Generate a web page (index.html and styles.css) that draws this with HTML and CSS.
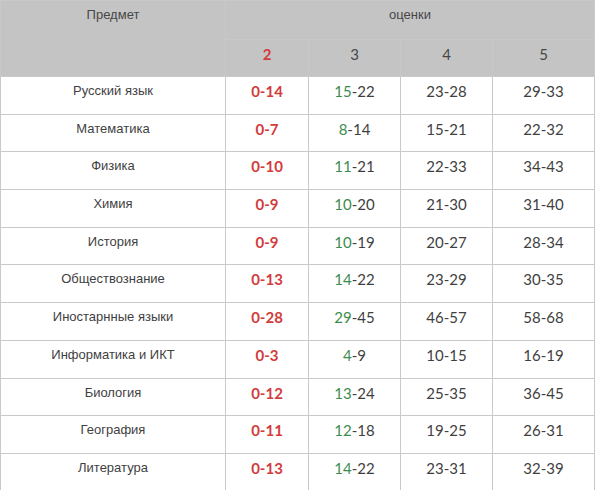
FILE: index.html
```html
<!DOCTYPE html>
<html lang="ru">
<head>
<meta charset="utf-8">
<link rel="stylesheet" href="styles.css">
</head>
<body>
<table class="grades">
  <colgroup>
    <col class="c-subj"><col class="c-2"><col class="c-3"><col class="c-4"><col class="c-5">
  </colgroup>
  <thead>
    <tr class="h1">
      <th rowspan="2" class="subj-h">Предмет</th>
      <th colspan="4">оценки</th>
    </tr>
    <tr class="h2">
      <th class="num red">2</th>
      <th class="num">3</th>
      <th class="num">4</th>
      <th class="num">5</th>
    </tr>
  </thead>
  <tbody>
    <tr><td>Русский язык</td><td class="num red">0-14</td><td class="num"><span class="green">15</span>-22</td><td class="num">23-28</td><td class="num">29-33</td></tr>
    <tr><td>Математика</td><td class="num red">0-7</td><td class="num"><span class="green">8</span>-14</td><td class="num">15-21</td><td class="num">22-32</td></tr>
    <tr><td>Физика</td><td class="num red">0-10</td><td class="num"><span class="green">11</span>-21</td><td class="num">22-33</td><td class="num">34-43</td></tr>
    <tr><td>Химия</td><td class="num red">0-9</td><td class="num"><span class="green">10</span>-20</td><td class="num">21-30</td><td class="num">31-40</td></tr>
    <tr><td>История</td><td class="num red">0-9</td><td class="num"><span class="green">10</span>-19</td><td class="num">20-27</td><td class="num">28-34</td></tr>
    <tr><td>Обществознание</td><td class="num red">0-13</td><td class="num"><span class="green">14</span>-22</td><td class="num">23-29</td><td class="num">30-35</td></tr>
    <tr><td>Иностарнные языки</td><td class="num red">0-28</td><td class="num"><span class="green">29</span>-45</td><td class="num">46-57</td><td class="num">58-68</td></tr>
    <tr><td>Информатика и ИКТ</td><td class="num red">0-3</td><td class="num"><span class="green">4</span>-9</td><td class="num">10-15</td><td class="num">16-19</td></tr>
    <tr><td>Биология</td><td class="num red">0-12</td><td class="num"><span class="green">13</span>-24</td><td class="num">25-35</td><td class="num">36-45</td></tr>
    <tr><td>География</td><td class="num red">0-11</td><td class="num"><span class="green">12</span>-18</td><td class="num">19-25</td><td class="num">26-31</td></tr>
    <tr><td>Литература</td><td class="num red">0-13</td><td class="num"><span class="green">14</span>-22</td><td class="num">23-31</td><td class="num">32-39</td></tr>
  </tbody>
</table>
</body>
</html>
```
FILE: styles.css
```css
html, body {
  margin: 0;
  padding: 0;
  background: #fff;
}
.grades {
  border-collapse: collapse;
  table-layout: fixed;
  width: 594px;
  font-family: "Liberation Sans", Arial, sans-serif;
  font-size: 13px;
  color: #3f3f3f;
}
.c-subj { width: 225px; }
.c-2 { width: 83px; }
.c-3 { width: 92px; }
.c-4 { width: 92px; }
.c-5 { width: 102px; }
.grades th, .grades td {
  border: 1px solid #c9c9c9;
  text-align: center;
  vertical-align: top;
  padding: 6px 4px 0;
  box-sizing: border-box;
}
.grades th {
  background: #c4c4c4;
  font-weight: normal;
  color: #474747;
}
.h1 th { height: 39px; }
.h2 th { height: 37px; }
.grades tbody td { height: 37.7px; }
.grades .num {
  font-family: Lato, "Liberation Sans", sans-serif;
  font-size: 15px;
  padding-top: 5px;
}
.grades .red {
  color: #d23c3c;
  font-weight: bold;
}
.green { color: #3d8c4f; }
```
